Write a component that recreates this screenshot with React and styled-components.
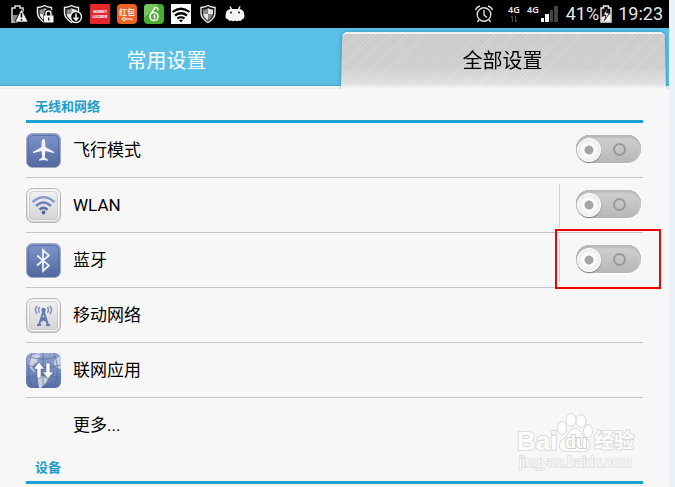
import React, { useState } from 'react';
import styled, { createGlobalStyle, css } from 'styled-components';

const GlobalStyle = createGlobalStyle`
  body {
    margin: 0;
    background: #eaf1fb;
    font-family: Roboto, "Noto Sans CJK SC", sans-serif;
  }

  * {
    box-sizing: border-box;
  }
`;

const Screen = styled.div`
  position: relative;
  min-height: 100vh;
  margin-right: 6px;
  background: #f7f7f7;
  overflow: hidden;
`;

const StatusBar = styled.header`
  display: flex;
  justify-content: space-between;
  height: 28px;
  padding: 0 6px 0 9px;
  background: #000;
  color: #e6e6e6;
`;

const StatusGroup = styled.div`
  display: flex;
  align-items: center;
  gap: ${(props) => props.$gap}px;

  svg {
    display: block;
    flex: none;
  }
`;

const StatusText = styled.span`
  font-size: 18px;
  line-height: 28px;
`;

const Tabs = styled.nav`
  display: flex;
  height: 63px;
  background: linear-gradient(#5bc0e6 55px, #4dadd3 58px, #fff 58px, #fff 59px, #e9e9e9 60px, #fbfbfb 62px, #f7f7f7);
`;

const hatch = css`
  background:
    repeating-linear-gradient(135deg, rgba(255, 255, 255, 0.2) 0 1px, transparent 1px 3px),
    linear-gradient(#c9c9c9, #cdcdcd 60%, #dedede 90%, #f7f7f7);
`;

const Tab = styled.button`
  position: relative;
  z-index: 0;
  flex: 1;
  height: 63px;
  padding: 0 3px 1px 0;
  border: none;
  background: transparent;
  color: ${(props) => (props.$active ? '#000' : '#fff')};
  font-family: inherit;
  font-size: 20px;
  cursor: pointer;

  ${(props) =>
    props.$active &&
    css`
      padding: 0 0 1px;

      &::before {
        content: '';
        position: absolute;
        z-index: -1;
        top: 3px;
        right: 3px;
        bottom: 2px;
        left: 5px;
        border-top: 2px solid #f2f2f2;
        border-radius: 5px 5px 0 0;
        box-shadow: 0 0 4px rgba(0, 70, 100, 0.45);
        clip-path: inset(-6px -6px 0 -6px);
        transform: perspective(1000px) rotateX(8deg);
        transform-origin: bottom;
        ${hatch}
      }
    `}
`;

const Content = styled.main`
  padding: 0 26px;
`;

const SectionTitle = styled.h2`
  height: 32px;
  margin: 0;
  padding-left: 9px;
  border-bottom: 3px solid #1ba1d1;
  color: #1b9fcd;
  font-size: 13px;
  font-weight: 700;
  line-height: 32px;
`;

const List = styled.ul`
  margin: 0;
  padding: 0;
  list-style: none;
`;

const Row = styled.li`
  display: flex;
  align-items: center;
  gap: 12px;
  height: 55px;
  border-bottom: 1px solid #c6c6c6;

  &:last-child {
    height: 54px;
    border-bottom: none;
  }
`;

const IconSlot = styled.div`
  flex: none;
  width: 35px;
  height: 35px;

  svg {
    display: block;
  }
`;

const Label = styled.label`
  flex: 1;
  color: #000;
  font-size: 17px;
  line-height: 24px;
`;

const SwitchCell = styled.div`
  position: relative;
  display: flex;
  align-items: center;
  height: 43px;
  padding: 0 2px 3px 16px;
  border-left: 1px solid ${(props) => (props.$divided ? '#cfcfcf' : 'transparent')};
`;

const Highlight = styled.div`
  position: absolute;
  top: -10px;
  right: -18px;
  bottom: -7px;
  left: -5px;
  border: 2px solid #f00000;
  pointer-events: none;
`;

const Switch = styled.input`
  position: relative;
  appearance: none;
  width: 65px;
  height: 28px;
  margin: 0;
  border-radius: 14px;
  background: linear-gradient(#d2d2d2, #b6b6b6);
  box-shadow:
    inset 0 2px 1px #b8b8b8,
    inset -2px 3px 1px #c9c9c9,
    inset 0 4px 1px -1px #949494,
    0 1px 2px #fff;
  cursor: pointer;

  &::before {
    content: '';
    position: absolute;
    top: 3px;
    left: ${(props) => (props.checked ? 40 : 1)}px;
    width: 24px;
    height: 24px;
    border-radius: 50%;
    background: radial-gradient(circle, #a5a5a5 4px, #fff 5px, #ededed 10px, #fff 12px);
    box-shadow: 0 1px 1px #777;
  }

  &::after {
    content: '';
    position: absolute;
    top: 8px;
    left: ${(props) => (props.checked ? 10 : 37)}px;
    box-sizing: border-box;
    width: 13px;
    height: 13px;
    border: 2px solid #999;
    border-radius: 50%;
  }
`;

const Watermark = styled.svg`
  position: absolute;
  right: 31px;
  bottom: 12px;
  pointer-events: none;
`;

const BatteryWarning = () => (
  <svg width="20" height="20" viewBox="0 0 20 20">
    <path d="M3 4h3V2h5v2h3v3l-6 11H3z" fill="none" stroke="#ddd" strokeWidth="1.5" />
    <path d="M4 11h5l-3 6H4z" fill="#888" />
    <path d="M12.500 5L19 18H6z" fill="#f2f2f2" stroke="#000" strokeWidth=".6" />
    <path d="M12.500 9v4.500M12.500 15v1.500" stroke="#000" strokeWidth="1.500" />
  </svg>
);

const ShieldBase = () => (
  <>
    <path d="M9 1.500c2 1.200 4 1.800 7 2v5.500c0 4-3 7-7 9.500-4-2.500-7-5.500-7-9.500V3.500c3-.2 5-.8 7-2z" fill="#111" stroke="#eee" strokeWidth="1.400" />
    <path d="M9 4v6H4V5.500c2 0 3.500-.5 5-1.500z" fill="#888" />
    <path d="M9 4v6h5V5.500c-2 0-3.500-.5-5-1.500z" fill="#e6e6e6" />
    <path d="M4 10h5v6.500c-3-2-4.500-4-5-6.500z" fill="#e6e6e6" />
    <path d="M14 10H9v6.500c3-2 4.500-4 5-6.500z" fill="#888" />
  </>
);

const ShieldLock = () => (
  <svg width="20" height="20" viewBox="1 0 19 20">
    <ShieldBase />
    <path d="M8 10h1V8.500c0-5 8-5 8 0V10h1.500v9H8z" fill="#000" />
    <path d="M10.500 12V9.500c0-3.500 5-3.500 5 0V12" fill="none" stroke="#eee" strokeWidth="1.500" />
    <rect x="8.500" y="11.500" width="9.500" height="7" fill="#f5f5f5" />
    <path d="M13.200 13.500v3" stroke="#222" strokeWidth="1.500" />
  </svg>
);

const ShieldDownload = () => (
  <svg width="20" height="20" viewBox="1 0 19 20">
    <ShieldBase />
    <circle cx="13.500" cy="13" r="5.500" fill="#000" stroke="#eee" strokeWidth="1.400" />
    <path d="M13.500 9.500v6M11 13.500l2.500 2.500 2.500-2.500" fill="none" stroke="#eee" strokeWidth="1.600" />
  </svg>
);

const MoneyLocker = () => (
  <svg width="20" height="20" viewBox="0 0 20 20">
    <rect width="20" height="20" rx="1" fill="#e5262b" />
    <g fill="#fff" fontFamily="Roboto, sans-serif" fontSize="4" fontWeight="900" textAnchor="middle">
      <text x="10" y="9">MONEY</text>
      <text x="10" y="14">LOCKER</text>
    </g>
  </svg>
);

const RedPacket = () => (
  <svg width="20" height="20" viewBox="0 0 20 20">
    <rect width="20" height="20" rx="4" fill="#ec6421" />
    <text x="10" y="11" fill="#fff" fontFamily="Noto Sans CJK SC, sans-serif" fontSize="8" fontWeight="500" textAnchor="middle">红包</text>
    <circle cx="7" cy="15" r="1.500" fill="none" stroke="#fff" />
    <path d="M8.500 15H15v1.500" fill="none" stroke="#fff" />
  </svg>
);

const GreenLock = () => (
  <svg width="20" height="20" viewBox="0 0 20 20">
    <rect width="20" height="20" rx="4" fill="#4aac31" />
    <path d="M0 14V4a4 4 0 0 1 4-4h10z" fill="#75c45c" />
    <circle cx="10" cy="12.500" r="4" fill="none" stroke="#fff" strokeWidth="1.600" />
    <path d="M6.800 10L10.500 4.500c1.500-2 4-.5 3.300 1.500M10.500 11v3" fill="none" stroke="#fff" strokeWidth="1.600" strokeLinecap="round" />
  </svg>
);

const WifiTile = () => (
  <svg width="20" height="20" viewBox="0 0 20 20">
    <rect width="20" height="20" fill="#fff" />
    <path d="M1.500 8Q10 1.500 18.500 8M4 11.500q6-4.500 12 0M6.500 14.500q3.500-2.500 7 0" fill="none" stroke="#000" strokeWidth="2.200" />
    <path d="M8 16.200q2-1.200 4 0L10 18.500z" />
  </svg>
);

const Shield = () => (
  <svg width="20" height="20" viewBox="0 0 18 20">
    <ShieldBase />
  </svg>
);

const AndroidHead = () => (
  <svg width="20" height="20" viewBox="0 0 20 20">
    <path d="M5 2.500l2 4M15 2.500l-2 4" stroke="#f4f4f4" strokeWidth="1.500" />
    <path d="M1 9c.5-3 3-4 5-4h8c2 0 4.500 1 5 4l.5 3c0 2-1 3-2 3-1 2-3 2.500-4 1.500-1 1-2.500 1-3.500 0-1 1-3 1-3.500 0-2 1-3.500-.5-4-1.500-2 0-2-2-2-3z" fill="#f4f4f4" />
    <circle cx="6" cy="8.500" r=".9" />
    <circle cx="14" cy="8.500" r=".9" />
  </svg>
);

const AlarmIcon = () => (
  <svg width="20" height="20" viewBox="0 0 20 20" fill="none" stroke="#ddd" strokeWidth="1.400">
    <circle cx="10" cy="10.500" r="6.800" />
    <path d="M10 6v5l3 2.500M1.500 6q1-3 4.500-4M18.500 6q-1-3-4.500-4M5 16l-1.500 2M15 16l1.500 2" />
  </svg>
);

const NetworkIcons = () => (
  <svg width="52" height="20" viewBox="0 0 52 20">
    <g fill="#eee" fontFamily="Noto Sans, sans-serif" fontSize="9" fontWeight="600">
      <text x="0" y="9">4G</text>
      <text x="19" y="9">4G</text>
    </g>
    <path d="M4.500 12v6M3 13.500L4.500 12M7.500 12v6M9 16.500L7.500 18" fill="none" stroke="#444" strokeWidth="1.200" />
    <path d="M33 14h3v4h-3zM37 10h4v8h-4z" fill="#f2f2f2" />
    <path d="M42 6h3v12h-3zM46 2h4v16h-4z" fill="#444" />
  </svg>
);

const BatteryIcon = () => (
  <svg width="12" height="18" viewBox="0 0 12 18">
    <path d="M1 3h2.500V1h5v2H11v14H1z" fill="#111" stroke="#eee" strokeWidth="1.400" />
    <path d="M1.500 12L10.500 9v7.500h-9z" fill="#eee" />
    <path d="M7.500 3.500L3 10h3l-1.500 5.500L9.500 8h-3z" fill="#f5f5f5" stroke="#111" strokeWidth=".8" />
  </svg>
);

// Rounded tile behind each of the settings glyphs
const Tile = ({ id, blue, children }) => (
  <svg width="35" height="35" viewBox="0 0 35 35" aria-hidden="true">
    <defs>
      <linearGradient id={id} x2="0" y2="1">
        <stop offset="0" stopColor={blue ? '#8096cb' : '#f3f3f3'} />
        <stop offset="1" stopColor={blue ? '#50689f' : '#d2d2d2'} />
      </linearGradient>
    </defs>
    <rect x=".5" y=".5" width="34" height="34" rx="6" fill={`url(#${id})`} stroke={blue ? '#a3a9ba' : '#b9b9b9'} />
    <rect x="2.500" y="2.500" width="30" height="30" rx="5" fill="none" stroke={blue ? '#526aa6' : '#fff'} strokeOpacity=".8" />
    {!blue && <rect x="3.500" y="3.500" width="28" height="28" rx="4" fill="none" stroke="#c2c2c2" strokeOpacity=".7" />}
    {children}
  </svg>
);

const AirplaneIcon = () => (
  <Tile id="airplane" blue>
    <path d="M17.500 6c1.200 0 1.900 2 1.900 4.500v3.500l8 4.500c.9.600.8 1.800 0 1.600l-8-2.100-.6 6.500 3 2v1.200l-4.300-.7-4.300.7v-1.200l3-2-.6-6.500-8 2.100c-.8.200-.9-1 0-1.600l8-4.500v-3.500C15.600 8 16.300 6 17.500 6z" fill="#f0f2f6" />
  </Tile>
);

const WlanIcon = () => (
  <Tile id="wlan">
    <g fill="none" stroke="#839bd0" strokeWidth="2.600">
      <path d="M6.500 14q11-9.500 22 0" />
      <path d="M10 18q7.500-7 15 0" stroke="#6e87c0" />
      <path d="M13.500 21.700q4-3.800 8 0" stroke="#5b74ad" />
    </g>
    <circle cx="17.500" cy="24.500" r="2" fill="#506aa5" />
  </Tile>
);

const BluetoothIcon = () => (
  <Tile id="bluetooth" blue>
    <path d="M11 12.500l12 10-6 5.500V7l6 5.500-12 10" fill="none" stroke="#f0f2f7" strokeWidth="1.700" />
  </Tile>
);

const MobileIcon = () => (
  <Tile id="mobile">
    <g fill="none" stroke="#647baf" strokeWidth="1.500">
      <path d="M17.500 13L13 27M17.500 13L22 27M15 20h5M14 23.500l6-3.500M21 23.500L15 20M11 27h4M20 27h4" strokeWidth="2" />
      <path d="M13.500 9q-2 3 0 6M21.500 9q2 3 0 6M11 8q-3 4 0 8M24 8q3 4 0 8" stroke="#8296c1" />
    </g>
    <circle cx="17.500" cy="12" r="2.200" fill="#647baf" />
  </Tile>
);

const GlobeIcon = () => (
  <svg width="35" height="35" viewBox="0 0 35 35" aria-hidden="true">
    <defs>
      <linearGradient id="globe" x2="0" y2="1">
        <stop offset="0" stopColor="#95a8d2" />
        <stop offset="1" stopColor="#566da6" />
      </linearGradient>
      <clipPath id="globe-clip"><rect width="35" height="35" rx="6" /></clipPath>
    </defs>
    <g clipPath="url(#globe-clip)">
      <rect width="35" height="35" fill="url(#globe)" />
      <path d="M4 3l8-2 3 2-3 2-1 4-3 2-2 4 4 4-3-1-5-6zM10 0l4 1-1-2zM29 5l6-2v13l-4-1-3-4zM12 22l5 1 5 3-2 4-5 5h-2l-1-7z" fill="#ccd2df" />
      <path d="M0 12q17 5 35 0M0 25q17-5 35 0M17 0v35M6 0q-7 17 0 35M28 0q7 17 0 35M3 4q14 4 29 0" fill="none" stroke="#526694" strokeOpacity=".65" />
      <path d="M13 9l5.500 7H15v9h-4v-9H7.500z" fill="#fff" stroke="#54658b" strokeWidth=".6" />
      <path d="M20 10h4v9h3.500L22 26l-5.500-7H20z" fill="#fff" stroke="#54658b" strokeWidth=".6" />
    </g>
  </svg>
);

const BaiduWatermark = () => (
  <Watermark width="124" height="64" viewBox="0 0 124 64">
    <g fill="#fdfdfd" stroke="#dcdcdc" strokeWidth="2" paintOrder="stroke" fontFamily="Liberation Sans, Noto Sans CJK SC, sans-serif">
      <text x="3" y="39" fontSize="26" fontWeight="700">Bai</text>
      <path d="M61 18c5 0 6 6 10 9 8 6 5 13-2 13H53c-8 0-10-7-2-13 4-3 5-9 10-9z" />
      <ellipse cx="48" cy="17" rx="4" ry="6" />
      <ellipse cx="57" cy="9" rx="4.500" ry="6" />
      <ellipse cx="67" cy="10" rx="4.500" ry="6" />
      <ellipse cx="74" cy="20" rx="4" ry="6" />
      <text x="51" y="37" fontSize="18" fontWeight="700" fill="#fff" stroke="#cfcfcf">du</text>
      <text x="80" y="37" fontSize="20" fontWeight="700" fontFamily="Noto Sans CJK SC, sans-serif">经验</text>
      <text x="5" y="56" fontSize="14" strokeWidth="1.500">jingyan.baidu.com</text>
    </g>
  </Watermark>
);

const settings = [
  { id: 'airplane-mode', label: '飞行模式', Icon: AirplaneIcon, toggle: true },
  { id: 'wlan-mode', label: 'WLAN', Icon: WlanIcon, toggle: true, divided: true },
  { id: 'bluetooth-mode', label: '蓝牙', Icon: BluetoothIcon, toggle: true, divided: true, highlighted: true },
  { id: 'mobile-network', label: '移动网络', Icon: MobileIcon },
  { id: 'network-apps', label: '联网应用', Icon: GlobeIcon },
  { id: 'more', label: '更多...' },
];

const App = () => {
  const [tab, setTab] = useState('all');
  const [enabled, setEnabled] = useState({});

  const toggle = (id) => setEnabled({ ...enabled, [id]: !enabled[id] });

  return (
    <>
      <GlobalStyle />
      <Screen>
        <StatusBar>
          <StatusGroup $gap={7}>
            <BatteryWarning />
            <ShieldLock />
            <ShieldDownload />
            <MoneyLocker />
            <RedPacket />
            <GreenLock />
            <WifiTile />
            <Shield />
            <AndroidHead />
          </StatusGroup>
          <StatusGroup $gap={6}>
            <StatusGroup $gap={14}>
              <AlarmIcon />
              <NetworkIcons />
            </StatusGroup>
            <StatusGroup $gap={1}>
              <StatusText>41%</StatusText>
              <BatteryIcon />
            </StatusGroup>
            <StatusText>19:23</StatusText>
          </StatusGroup>
        </StatusBar>

        <Tabs>
          <Tab $active={tab === 'common'} onClick={() => setTab('common')}>常用设置</Tab>
          <Tab $active={tab === 'all'} onClick={() => setTab('all')}>全部设置</Tab>
        </Tabs>

        <Content>
          <SectionTitle>无线和网络</SectionTitle>
          <List>
            {settings.map(({ id, label, Icon, toggle: hasSwitch, divided, highlighted }) => (
              <Row key={id}>
                <IconSlot>{Icon && <Icon />}</IconSlot>
                <Label as={hasSwitch ? 'label' : 'span'} htmlFor={hasSwitch ? id : undefined}>
                  {label}
                </Label>
                {hasSwitch && (
                  <SwitchCell $divided={divided}>
                    <Switch
                      id={id}
                      type="checkbox"
                      role="switch"
                      checked={!!enabled[id]}
                      onChange={() => toggle(id)}
                    />
                    {highlighted && <Highlight />}
                  </SwitchCell>
                )}
              </Row>
            ))}
          </List>
          <SectionTitle>设备</SectionTitle>
        </Content>
        <BaiduWatermark />
      </Screen>
    </>
  );
};

export default App;
